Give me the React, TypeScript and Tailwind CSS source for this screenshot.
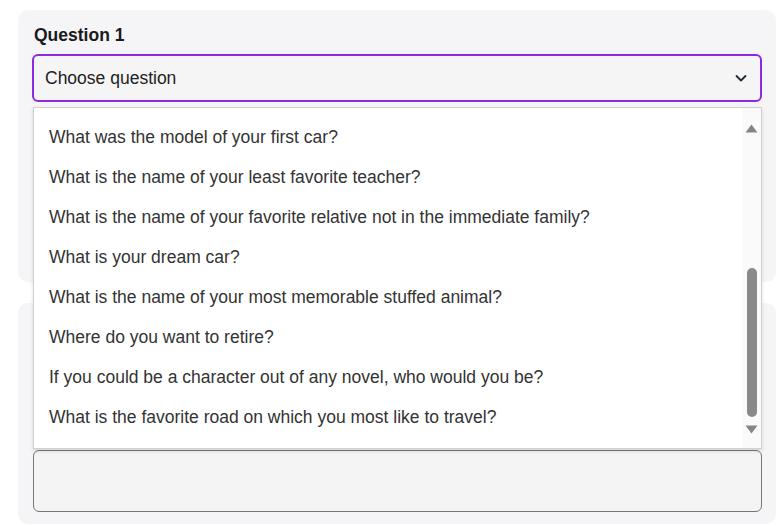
import React from 'react';

const questions = [
  'What was the model of your first car?',
  'What is the name of your least favorite teacher?',
  'What is the name of your favorite relative not in the immediate family?',
  'What is your dream car?',
  'What is the name of your most memorable stuffed animal?',
  'Where do you want to retire?',
  'If you could be a character out of any novel, who would you be?',
  'What is the favorite road on which you most like to travel?',
];

const Chevron = () => (
  <svg width="14" height="14" viewBox="0 0 14 14" fill="none">
    <path d="M2.5 5l4.5 4.5L11.5 5" stroke="#1f2937" strokeWidth="1.8" strokeLinecap="round" strokeLinejoin="round" />
  </svg>
);

const Dropdown = () => (
  <div className="absolute left-[1px] right-0 top-[53px] z-10 flex h-[342px] border border-[#d0d0d0] bg-white shadow-[0_2px_4px_rgba(0,0,0,0.12)]">
    <ul className="flex-1 pt-[9px]">
      {questions.map((q) => (
        <li key={q} className="flex h-[40px] items-center pl-[15px] text-[17.5px] text-[#333]">
          {q}
        </li>
      ))}
    </ul>
    <div className="flex w-[19px] shrink-0 flex-col items-center bg-[#fafafa] pt-[16px] pb-[14px]">
      <svg className="shrink-0" width="13" height="9" viewBox="0 0 13 9"><path d="M6.5 0.5L12.5 8.5H0.5Z" fill="#858585" /></svg>
      <div className="flex w-full flex-1 flex-col items-center pt-[135px] pb-[8px]">
        <div className="w-[10px] flex-1 rounded-full bg-[#8a8a8a]" />
      </div>
      <svg className="shrink-0" width="13" height="9" viewBox="0 0 13 9"><path d="M0.5 0.5H12.5L6.5 8.5Z" fill="#858585" /></svg>
    </div>
  </div>
);

export default function App() {
  return (
    <div className="min-h-[526px] bg-white pl-[18px] pr-[2px] pt-[10px]" style={{ fontFamily: '"Liberation Sans", Arial, sans-serif' }}>
      <div className="relative z-10 h-[272px] rounded-[10px] bg-[#f5f5f7] pl-[14px] pr-[14px] pt-[15px]">
        <div className="pl-[2px] text-[17.5px] font-bold leading-[20px] text-[#1a1a1a]">Question 1</div>
        <div className="relative mt-[9px]">
          <div className="flex h-[48px] items-center justify-between rounded-[6px] border-2 border-[#8a2be2] bg-[#f5f5f5] pl-[11px] pr-[12px]">
            <span className="text-[17.5px] text-[#222]">Choose question</span>
            <Chevron />
          </div>
          <Dropdown />
        </div>
      </div>
      <div className="mt-[21px] h-[221px] rounded-[10px] bg-[#f5f5f7] pl-[15px] pr-[14px] pt-[147px]">
        <div className="h-[62px] rounded-[6px] border border-[#777] bg-[#f4f4f4]" />
      </div>
    </div>
  );
}
